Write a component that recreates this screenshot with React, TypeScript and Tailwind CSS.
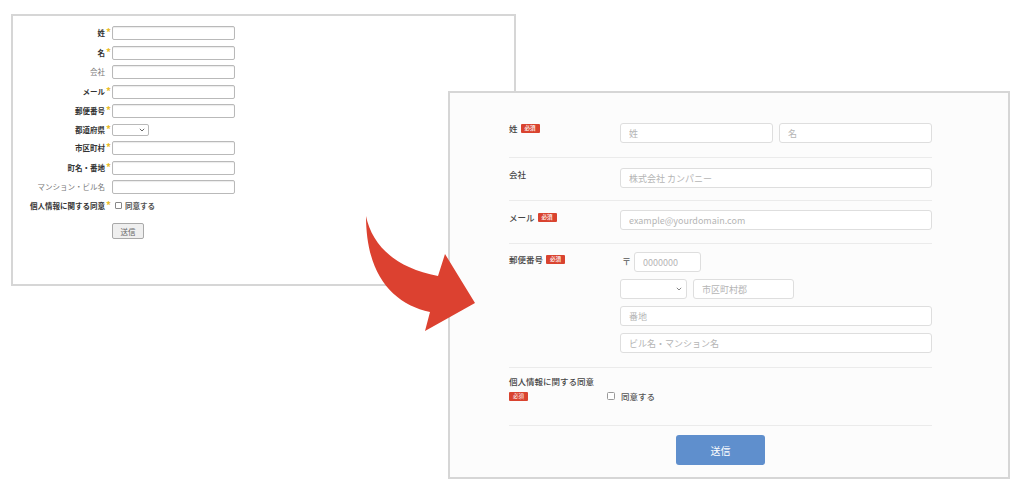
import React from "react";

const Badge = () => (
  <span className="inline-flex items-center justify-center w-[19px] h-[9px] rounded-[1px] bg-[#d9432f] text-white text-[5.5px] leading-none">
    必須
  </span>
);

const OldRow = ({ label, required = true, children }) => (
  <div className="flex items-center">
    <div className="w-[99px] flex justify-end items-center">
      <span className={required ? "text-[7.5px] font-bold text-[#333]" : "text-[7.5px] text-[#777]"}>{label}</span>
      <span className="w-[7px] pl-[1px] text-[10px] font-bold leading-[9px] text-[#eabd2c] self-start">{required ? "*" : ""}</span>
    </div>
    {children}
  </div>
);

const OldInput = () => (
  <div className="w-[123px] h-[14px] border border-[#b9b9b9] rounded-[2px] bg-white shadow-[inset_0_1px_1px_rgba(0,0,0,0.08)]" />
);

const OldForm = () => (
  <div className="absolute left-[11px] top-[14px] w-[505px] h-[272px] border-2 border-[#d6d6d6] bg-white">
    <div className="flex flex-col gap-[5.5px] pt-[10px]">
      <OldRow label="姓"><OldInput /></OldRow>
      <OldRow label="名"><OldInput /></OldRow>
      <OldRow label="会社" required={false}><OldInput /></OldRow>
      <OldRow label="メール"><OldInput /></OldRow>
      <OldRow label="郵便番号"><OldInput /></OldRow>
      <OldRow label="都道府県">
        <div className="w-[37px] h-[12px] border border-[#b9b9b9] rounded-[2px] bg-white flex items-center justify-end pr-[3px]">
          <svg width="6" height="4" viewBox="0 0 6 4"><path d="M0.8 0.8 L3 3 L5.2 0.8" fill="none" stroke="#555" strokeWidth="0.9" /></svg>
        </div>
      </OldRow>
      <OldRow label="市区町村"><OldInput /></OldRow>
      <OldRow label="町名・番地"><OldInput /></OldRow>
      <OldRow label="マンション・ビル名" required={false}><OldInput /></OldRow>
      <OldRow label="個人情報に関する同意">
        <div className="flex items-center h-[11px]">
          <div className="ml-[3px] w-[7px] h-[7px] border border-[#888] rounded-[1px] bg-white" />
          <span className="ml-[3px] text-[7.5px] font-bold text-[#555]">同意する</span>
        </div>
      </OldRow>
      <div className="flex mt-[7px]">
        <div className="w-[99px]" />
        <div className="w-[32px] h-[16px] border border-[#a9a9a9] rounded-[2px] bg-[#efefef] flex items-center justify-center text-[7.5px] text-[#666]">
          送信
        </div>
      </div>
    </div>
  </div>
);

const Field = ({ placeholder, className = "" }) => (
  <input
    placeholder={placeholder}
    className={`h-[20px] border border-[#dedede] rounded-[3px] bg-white px-[8px] text-[9px] text-[#444] placeholder:text-[#b5b5b5] outline-none ${className}`}
  />
);

const Label = ({ text, required = false }) => (
  <div className="flex items-center gap-[3px] h-[11px] text-[8.5px] font-medium text-[#444]">
    <span>{text}</span>
    {required && <Badge />}
  </div>
);

const NewForm = () => (
  <div className="absolute left-[448px] top-[91px] w-[562px] h-[388px] border-2 border-[#d6d6d6] bg-[#fcfcfc]">
    <div className="ml-[59px] mt-[30px] w-[423px] flex flex-col">
      <div className="flex pb-[14px] border-b border-[#ebebeb]">
        <div className="w-[111px]"><Label text="姓" required /></div>
        <div className="flex gap-[6px]">
          <Field placeholder="姓" className="w-[153px]" />
          <Field placeholder="名" className="w-[153px]" />
        </div>
      </div>
      <div className="flex pt-[10px] pb-[12px] border-b border-[#ebebeb]">
        <div className="w-[111px] pt-[1px]"><Label text="会社" /></div>
        <Field placeholder="株式会社 カンパニー" className="w-[312px]" />
      </div>
      <div className="flex pt-[9px] pb-[13px] border-b border-[#ebebeb]">
        <div className="w-[111px] pt-[2px]"><Label text="メール" required /></div>
        <Field placeholder="example@yourdomain.com" className="w-[312px]" />
      </div>
      <div className="flex pt-[8px] pb-[14px] border-b border-[#ebebeb]">
        <div className="w-[111px] pt-[2px]"><Label text="郵便番号" required /></div>
        <div className="flex flex-col gap-[7px]">
          <div className="flex items-center">
            <span className="w-[14px] pl-[2px] text-[9px] text-[#555]">〒</span>
            <Field placeholder="0000000" className="w-[67px]" />
          </div>
          <div className="flex gap-[6px]">
            <div className="w-[67px] h-[20px] border border-[#dedede] rounded-[3px] bg-white flex items-center justify-end pr-[4px]">
              <svg width="6" height="4" viewBox="0 0 6 4"><path d="M0.8 0.8 L3 3 L5.2 0.8" fill="none" stroke="#777" strokeWidth="0.9" /></svg>
            </div>
            <Field placeholder="市区町村郡" className="w-[101px]" />
          </div>
          <Field placeholder="番地" className="w-[312px]" />
          <Field placeholder="ビル名・マンション名" className="w-[312px]" />
        </div>
      </div>
      <div className="flex pt-[8px] pb-[20px] border-b border-[#ebebeb]">
        <div className="w-[98px] flex flex-col gap-[5px]">
          <Label text="個人情報に関する同意" />
          <Badge />
        </div>
        <div className="flex items-center pt-[11px] h-[29px]">
          <div className="w-[8px] h-[8px] border border-[#999] rounded-[1.5px] bg-white" />
          <span className="ml-[6px] text-[8.5px] font-medium text-[#555]">同意する</span>
        </div>
      </div>
      <div className="flex justify-center mt-[9px]">
        <div className="w-[89px] h-[30px] rounded-[3px] bg-[#5f8fcd] flex items-center justify-center text-[10px] text-white">
          送信
        </div>
      </div>
    </div>
  </div>
);

const Arrow = () => (
  <svg className="absolute left-[355px] top-[205px]" width="130" height="130" viewBox="355 205 130 130">
    <path
      d="M366 216 C372 245 395 268 438 276 L445 254 L475 303 L425 331 L430 312 C393 304 366 275 366 216 Z"
      fill="#dc4130"
    />
  </svg>
);

export default function App() {
  return (
    <div className="relative w-[1024px] h-[499px] bg-white overflow-hidden font-['Noto_Sans_CJK_JP','Noto_Sans',sans-serif]">
      <OldForm />
      <NewForm />
      <Arrow />
    </div>
  );
}
